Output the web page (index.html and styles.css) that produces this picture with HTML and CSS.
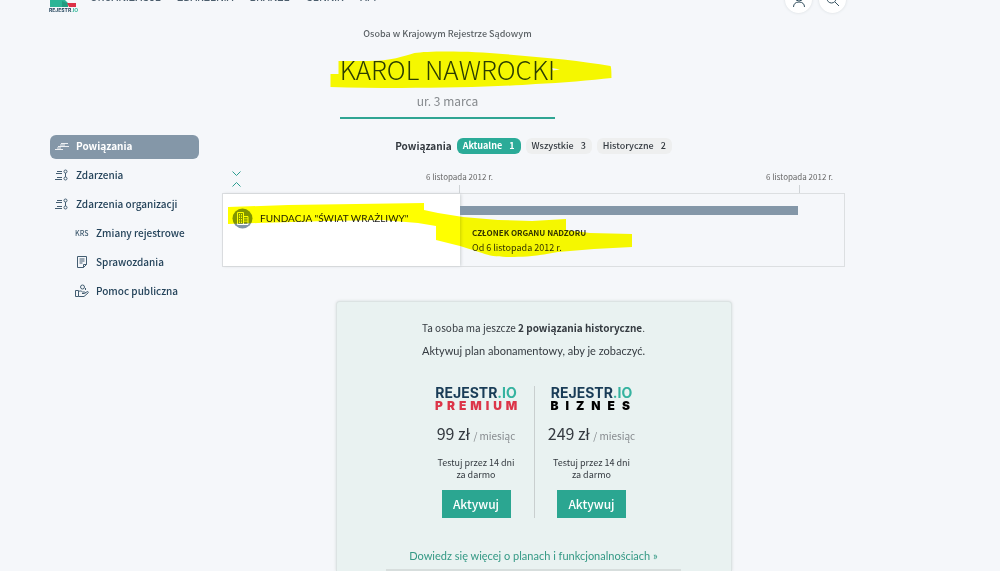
FILE: index.html
```html
<!DOCTYPE html>
<html lang="pl">
<head>
<meta charset="utf-8">
<meta name="viewport" content="width=device-width, initial-scale=1">
<title>Karol Nawrocki – Rejestr.io</title>
<link rel="stylesheet" href="styles.css">
</head>
<body>
<header class="topbar">
  <a class="brand" href="#" aria-label="Rejestr.io">
    <svg width="28" height="28" viewBox="0 0 28 28">
      <path fill="#2bb596" d="M1 0h17v16h1v7H1z"/>
      <path fill="#f5f7fa" d="M12 12l7 7V8z"/>
      <path fill="#17745f" d="M13 17l5 2 1 4h-6z" opacity=".4"/>
      <path fill="#dd3348" d="M18 19h9v4h-7z"/>
      <text class="brand-text" x="0" y="28">REJESTR<tspan class="brand-io">.IO</tspan></text>
    </svg>
  </a>
  <nav class="nav">
    <a href="#">ORGANIZACJE</a>
    <a href="#">ZDARZENIA</a>
    <a href="#">BRANŻE</a>
    <a href="#">CENNIK</a>
    <a href="#">API</a>
  </nav>
  <div class="tools">
    <button class="round" type="button" aria-label="Konto">
      <svg width="16" height="16" viewBox="0 0 16 16"><circle cx="8" cy="5" r="4"/><path d="M2.500 15c0-3 2-5 5.500-5s5.500 2 5.500 5"/></svg>
    </button>
    <button class="round" type="button" aria-label="Szukaj">
      <svg width="16" height="16" viewBox="0 0 16 16"><circle cx="6.500" cy="6.500" r="4.500"/><path d="M10 10l4 4"/></svg>
    </button>
  </div>
</header>

<main class="page">
  <section class="person">
    <p class="registry">Osoba w Krajowym Rejestrze Sądowym</p>
    <div class="person-id">
      <h1 class="name">KAROL NAWROCKI</h1>
      <p class="born">ur. 3 marca</p>
      <svg class="marker marker-name" width="282" height="40" viewBox="0 0 282 40" aria-hidden="true">
        <path fill-rule="evenodd" d="M8.500 11h30c22 0 36-5 46-8 14-2.500 60-2 88 1 40 3 80 7 108 12 1 1 1 10 1 12-20 2-50 5-76 6-50 4-140 5-205 3V24h8zM222 18l8 1.500-7 1z"/>
      </svg>
    </div>
  </section>

  <div class="columns">
    <nav class="side">
      <a class="side-link active" href="#">
        <svg class="ico" width="14" height="12" viewBox="0 0 14 12"><path d="M6 3.500h7M3 6.500h11M0 9.500h8M5 5h5M2 8h4"/></svg>Powiązania</a>
      <a class="side-link" href="#">
        <svg class="ico" width="14" height="12" viewBox="0 0 14 12"><path d="M2 2.500h5M1 4.500h6M2 8.500h5M0 10.500h7M10.500 4v4"/><circle cx="10.500" cy="2.500" r="1.500"/><circle cx="10.500" cy="9.500" r="1.500"/></svg>Zdarzenia</a>
      <a class="side-link" href="#">
        <svg class="ico" width="14" height="12" viewBox="0 0 14 12"><path d="M2 2.500h5M1 4.500h6M2 8.500h5M0 10.500h7M10.500 4v4"/><circle cx="10.500" cy="2.500" r="1.500"/><circle cx="10.500" cy="9.500" r="1.500"/></svg>Zdarzenia organizacji</a>
      <a class="side-link sub" href="#"><span class="ico krs">KRS</span>Zmiany rejestrowe</a>
      <a class="side-link sub" href="#">
        <svg class="ico" width="14" height="14" viewBox="0 0 14 14"><path d="M2.500 1.500h9v8l-3 3h-6zM8.500 12.500v-3h3M4.500 4h5M4.500 6h5M4.500 8h3"/></svg>Sprawozdania</a>
      <a class="side-link sub" href="#">
        <svg class="ico" width="14" height="14" viewBox="0 0 14 14"><path d="M.5 6.500h3v6h-3zM3.500 7.500c2-1 3-.5 4 .5h2c1 0 1 1.500 0 1.500H7M10 9l2.500-1.500c1 0 1 1 .5 1.500l-4 3.500H3.500"/><circle cx="7.500" cy="3" r="2"/><path d="M10.500 4v2"/></svg>Pomoc publiczna</a>
    </nav>

    <div class="content">
      <div class="filters">
        <h2 class="filters-title">Powiązania</h2>
        <button class="pill on" type="button">Aktualne <span>1</span></button>
        <button class="pill" type="button">Wszystkie <span>3</span></button>
        <button class="pill" type="button">Historyczne <span>2</span></button>
      </div>

      <div class="axis">
        <div class="folds">
          <button class="fold" type="button" aria-label="Rozwiń"><svg width="9" height="5" viewBox="0 0 9 5"><path d="M.5.5l4 4 4-4"/></svg></button>
          <button class="fold" type="button" aria-label="Zwiń"><svg width="9" height="5" viewBox="0 0 9 5"><path d="M.5 4.500l4-4 4 4"/></svg></button>
        </div>
        <div class="dates">
          <time class="date" datetime="2012-11-06">6 listopada 2012 r.</time>
          <time class="date" datetime="2012-11-06">6 listopada 2012 r.</time>
        </div>
      </div>

      <section class="timeline">
        <div class="org">
          <svg width="21" height="21" viewBox="0 0 21 21" aria-hidden="true">
            <circle cx="10.500" cy="10.500" r="10" fill="#8195a8"/>
            <path d="M5.500 16.500v-12h6v12zM11.500 8.500h4.500v8h-4.500z" fill="none" stroke="#fff"/>
            <path d="M7.500 6v9M9.500 6v9M13 10v5M15 10v5" stroke="#fff" stroke-dasharray="1.500 1"/>
          </svg>
          <a class="org-name" href="#">FUNDACJA "ŚWIAT WRAŻLIWY"</a>
        </div>
        <div class="track">
          <div class="bar" style="width:88%"></div>
          <p class="role">CZŁONEK ORGANU NADZORU</p>
          <p class="since">Od 6 listopada 2012 r.</p>
        </div>
        <svg class="marker marker-row" width="412" height="58" viewBox="0 0 412 58" aria-hidden="true">
          <path d="M6 5l60-2 136-2v7l14 3 25 4 35 3 34 1 34-2v11l24 3 42 1v13l-38 2-36 3c-20 4-34 5-48 5-12 0-20-1-28-4l-22-7-24-6V24l-18-3-36-3-56 1-68 2-30 1z"/>
        </svg>
      </section>

      <section class="offer">
        <p class="offer-text">Ta osoba ma jeszcze <strong>2 powiązania historyczne</strong>.</p>
        <p class="offer-text invite">Aktywuj plan abonamentowy, aby je zobaczyć.</p>
        <div class="plans">
          <article class="plan">
            <h3 class="plan-logo">REJESTR<span class="io">.IO</span></h3>
            <p class="tier premium">PREMIUM</p>
            <p class="price">99 zł <small>/ miesiąc</small></p>
            <p class="trial">Testuj przez 14 dni<br>za darmo</p>
            <button class="buy" type="button">Aktywuj</button>
          </article>
          <article class="plan">
            <h3 class="plan-logo">REJESTR<span class="io">.IO</span></h3>
            <p class="tier biznes">BIZNES</p>
            <p class="price">249 zł <small>/ miesiąc</small></p>
            <p class="trial">Testuj przez 14 dni<br>za darmo</p>
            <button class="buy" type="button">Aktywuj</button>
          </article>
        </div>
        <a class="more" href="#">Dowiedz się więcej o planach i funkcjonalnościach »</a>
        <hr class="rule">
      </section>
    </div>
  </div>
</main>
</body>
</html>
```
FILE: styles.css
```css
* { box-sizing: border-box; }

body {
  margin: 0;
  background: #f5f7fa;
  color: #343a40;
  font: 10px/16px "Noto Sans CJK SC", "Noto Sans", sans-serif;
}

h1, h2, h3, p { margin: 0; }
a { color: inherit; text-decoration: none; }
button { font: inherit; color: inherit; border: 0; padding: 0; cursor: pointer; }

.topbar {
  display: flex;
  align-items: flex-end;
  height: 30px;
  margin-top: -17px;
  padding: 0 154px 0 49px;
}
.brand { display: block; height: 28px; width: 28px; margin-bottom: 1px; }
.brand svg { display: block; overflow: visible; }
.brand-text { font: 700 5px "Inter", sans-serif; fill: #1f4058; }
.brand-io { fill: #2bb596; }
.nav {
  display: flex;
  gap: 16px;
  margin: 0 auto 8px 13px;
  font: 500 10px/16px "Inter", sans-serif;
  color: #4b5d6c;
}
.tools { display: flex; gap: 7px; }
.round {
  display: grid;
  place-items: center;
  width: 27px;
  height: 27px;
  border-radius: 50%;
  background: #fff;
  box-shadow: 0 0 3px #d5dade;
}
.round svg { fill: none; stroke: #34505f; }

.page { padding: 0 155px 0 50px; }

.person {
  display: flex;
  flex-direction: column;
  align-items: center;
  padding-top: 13px;
  color: #5d6367;
}
.registry { font-size: 9px; font-weight: 500; }
.person-id {
  position: relative;
  margin-top: 9px;
  border-bottom: 2px solid #2fa593;
  text-align: center;
}
.name { font-size: 26px; line-height: 36px; font-weight: 300; color: #2c3e50; }
.born { font-size: 12px; line-height: 18px; padding: 5px 0 7px; color: #85898d; }
.marker { position: absolute; fill: #ffff00; mix-blend-mode: multiply; pointer-events: none; }
.marker-name { left: -10px; top: -1px; }
.marker-row { left: -1px; top: 8px; }

.columns {
  display: grid;
  grid-template-columns: 149px minmax(0, 1fr);
  column-gap: 23px;
  margin-top: 16px;
}

.side { display: flex; flex-direction: column; gap: 5px; color: #24435a; font-weight: 500; }
.side-link {
  display: flex;
  align-items: center;
  gap: 7px;
  height: 24px;
  padding: 0 0 2px 5px;
  border-radius: 6px;
}
.side-link.sub { padding-left: 25px; }
.active { background: #8497a8; color: #fff; font-weight: 700; }
.ico { flex: none; width: 14px; fill: none; stroke: currentColor; opacity: .85; }
.krs { font-size: 7px; }

.filters { display: flex; justify-content: center; align-items: center; gap: 5px; padding-top: 3px; }
.filters-title { font-size: 10px; line-height: 16px; font-weight: 700; }
.pill {
  display: flex;
  gap: 7px;
  padding: 0 6px;
  border-radius: 6px;
  background: #eeefef;
  font-size: 9px;
  line-height: 16px;
  font-weight: 500;
}
.pill.on { background: #2bab98; color: #fff; font-weight: 700; }

.axis { display: flex; margin-top: 15px; }
.folds { display: flex; flex-direction: column; gap: 6px; padding: 2px 0 0 10px; width: 204px; }
.fold { display: block; width: 9px; height: 5px; background: none; }
.fold svg { display: block; fill: none; stroke: #2c9d91; }
.dates { flex: 1; display: flex; justify-content: space-between; padding-right: 12px; }
.date {
  display: flex;
  flex-direction: column;
  align-items: center;
  font-size: 8px;
  line-height: 16px;
  color: #666;
}
.date::after { content: ""; width: 1px; height: 8px; background: #cfd3d6; }

.timeline {
  position: relative;
  display: grid;
  grid-template-columns: 237px minmax(0, 1fr);
  min-height: 74px;
  border: 1px solid #dcdfe1;
}
.org {
  display: flex;
  align-items: flex-start;
  gap: 7px;
  padding: 14px 0 0 9px;
  background: #fff;
  box-shadow: 1px 0 3px #ccd0d3;
}
.org-name { font: 10px/20px "Lato", sans-serif; color: #222; }
.track { padding-top: 12px; line-height: 15px; color: #333; }
.bar { height: 9px; margin-bottom: 10px; background: #8497a8; }
.role, .since { padding-left: 12px; }
.role { font-size: 8px; font-weight: 700; }
.since { font-size: 9px; }

.offer {
  display: flex;
  flex-direction: column;
  align-items: center;
  width: 396px;
  max-width: 100%;
  margin: 34px auto 0;
  padding-top: 17px;
  border: 1px solid #dce3e3;
  border-bottom: 0;
  border-radius: 4px 4px 0 0;
  background: #e9f2f1;
  box-shadow: 0 0 3px #d5dada;
}
.offer-text { line-height: 17px; margin-bottom: 6px; }
.invite, .more { font-family: "Lato", sans-serif; font-size: 11px; }
.plans { display: flex; margin-top: 21px; }
.plan {
  display: flex;
  flex-direction: column;
  align-items: center;
  width: 115px;
}
.plan + .plan { border-left: 1px solid #c9cfcf; }
.plan-logo { font: 700 14px/13px "Inter", sans-serif; color: #193c57; }
.io { color: #36b3a0; }
.tier { width: 82px; font: 900 12px/14px "Inter", sans-serif; white-space: nowrap; }
.premium { letter-spacing: 4px; color: #dc3549; }
.biznes { letter-spacing: 7px; color: #000; }
.price { margin-top: 9px; font-size: 16px; line-height: 22px; }
.price small { font-size: 10px; color: #85898d; }
.trial { margin-top: 10px; font-size: 9px; line-height: 12px; text-align: center; }
.buy {
  margin-top: 9px;
  width: 69px;
  height: 28px;
  background: #2ba691;
  color: #fff;
  font-size: 12px;
  line-height: 18px;
  font-weight: 500;
}
.more { margin-top: 29px; line-height: 18px; color: #349985; }
.rule { width: 75%; height: 2px; margin: 4px 0 0; border: 0; background: #d7dedd; }
```
